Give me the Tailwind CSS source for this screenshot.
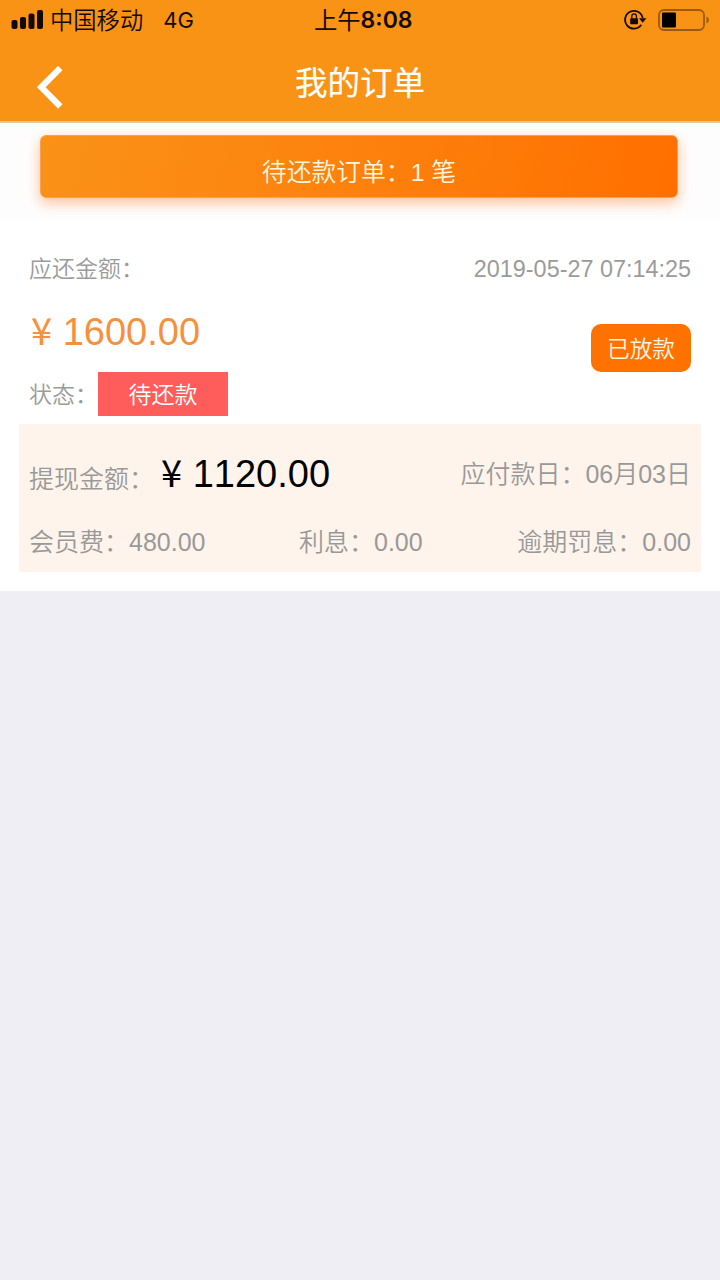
<!DOCTYPE html>
<html lang="zh-CN">
<head>
<meta charset="utf-8">
<title>我的订单</title>
<script src="https://cdn.jsdelivr.net/npm/@tailwindcss/browser@4"></script>
</head>
<body class="w-[720px] h-[1280px] overflow-hidden bg-[#efeef5] font-['Liberation_Sans','Noto_Sans_CJK_SC',sans-serif] whitespace-nowrap [font-kerning:none]">
<header class="h-[123px] bg-[#f99316] border-b-2 border-[#e3c9ab]">
  <div class="h-10 flex items-center justify-between pl-[11px] pr-[10px] text-[#140a00] font-['Inter','Noto_Sans_CJK_SC',sans-serif]">
    <div class="flex items-center w-[303px]">
      <svg class="w-8 h-5 mr-[7px]" viewBox="0 0 32 20" fill="currentColor"><rect x="0.5" y="10" width="6" height="9" rx="2"/><rect x="9" y="7" width="6" height="12" rx="2"/><rect x="17.5" y="3.500" width="6" height="15.500" rx="2"/><rect x="26" y="0" width="6" height="19" rx="2"/></svg>
      <span class="text-[23.300px] leading-10 mt-px font-[350]">中国移动</span>
      <span class="text-[22px] leading-10 ml-5">4G</span>
    </div>
    <div class="flex items-center text-[23.300px] leading-10"><span class="mt-px">上午</span><span class="font-semibold text-[23px]">8:08</span></div>
    <div class="flex-1 flex items-center justify-end">
      <svg class="w-[23px] h-[22px] mr-[11px]" viewBox="0 0 23 22"><path d="M17.300 15.800A8.900 8.900 0 1 1 18.700 9" fill="none" stroke="currentColor" stroke-width="1.800"/><path d="M15 9.300h7.400l-3.700 4.400z" fill="currentColor"/><rect x="6.200" y="9.200" width="7.800" height="6" rx="0.8" fill="currentColor"/><path d="M7.800 9.700V7.200a2.300 2.300 0 0 1 4.600 0V9.700" fill="none" stroke="currentColor" stroke-width="1.300"/></svg>
      <svg class="w-[52px] h-[22px]" viewBox="0 0 52 22"><rect x="1" y="1" width="45" height="20" rx="5" fill="none" stroke="#9c5b0c" stroke-width="1.800"/><rect x="4" y="3.500" width="14" height="15" rx="1" fill="#000"/><path d="M48.500 7.500q2.500 1 2.500 3.500t-2.500 3.500z" fill="#9c5b0c"/></svg>
    </div>
  </div>
  <div class="h-[81px] grid grid-cols-3 items-start text-white">
    <svg class="w-[26px] h-[43px] ml-[37px] mt-[26px]" viewBox="0 0 26 43"><path d="M23.300 2L4.200 21.200L23.300 40.500" fill="none" stroke="currentColor" stroke-width="6.200"/></svg>
    <h1 class="text-center text-[32.500px] leading-[48px] mt-5 font-normal [-webkit-text-stroke:0.2px_white]">我的订单</h1>
  </div>
</header>
<section class="h-[97px] bg-[#fefdfe] pt-3 pl-10">
  <div class="w-[638px] h-[63px] rounded-md border border-[#fba052] bg-linear-105 from-[#fa9217] to-[#ff6f00] shadow-[0_5px_14px_rgba(255,112,10,0.42)] text-center text-[#fff5df] text-[24.800px] leading-[73px] font-[350]">待还款订单：1 笔</div>
</section>
<main class="h-[371px] bg-white">
  <div class="h-[204px] px-[29px] flex justify-between text-[#9b9b9b] font-[350]">
    <div>
      <div class="text-[23px] leading-8 mt-[33px]">应还金额：</div>
      <div class="text-[38px] leading-[48px] mt-[23px] pl-0.5 text-[#f6903c] font-normal"><span class="font-['Noto_Sans_CJK_SC'] text-[38px] leading-none">¥</span> 1600.00</div>
      <div class="flex mt-4 h-11 leading-[46px] text-[23px]">
        <span class="w-[69px]">状态：</span>
        <span class="w-[130px] bg-[#ff5c5c] text-white text-center">待还款</span>
      </div>
    </div>
    <div class="flex flex-col items-end">
      <div class="text-[23.400px] leading-8 mt-[33px] font-normal">2019-05-27 07:14:25</div>
      <div class="w-[100px] h-12 mt-[39px] rounded-[10px] bg-[#ff7200] text-[#fff5e5] text-center text-[22.700px] leading-[51px]">已放款</div>
    </div>
  </div>
  <div class="h-[148px] w-[682px] ml-[19px] px-[10px] bg-[#fff4ec] text-[#999] text-[25px] font-[350]">
    <div class="flex h-[88px]">
      <span class="leading-9 mt-[37px] w-[132px]">提现金额：</span>
      <span class="text-[38px] leading-[48px] mt-[26px] text-black font-normal"><span class="font-['Noto_Sans_CJK_SC'] text-[38px] leading-none">¥</span> 1120.00</span>
      <span class="leading-9 mt-8 ml-auto">应付款日：06月03日</span>
    </div>
    <div class="flex leading-9 mt-3">
      <span class="w-[270px]">会员费：<span class="font-normal">480.00</span></span>
      <span>利息：<span class="font-normal">0.00</span></span>
      <span class="ml-auto">逾期罚息：<span class="font-normal">0.00</span></span>
    </div>
  </div>
</main>
</body>
</html>
